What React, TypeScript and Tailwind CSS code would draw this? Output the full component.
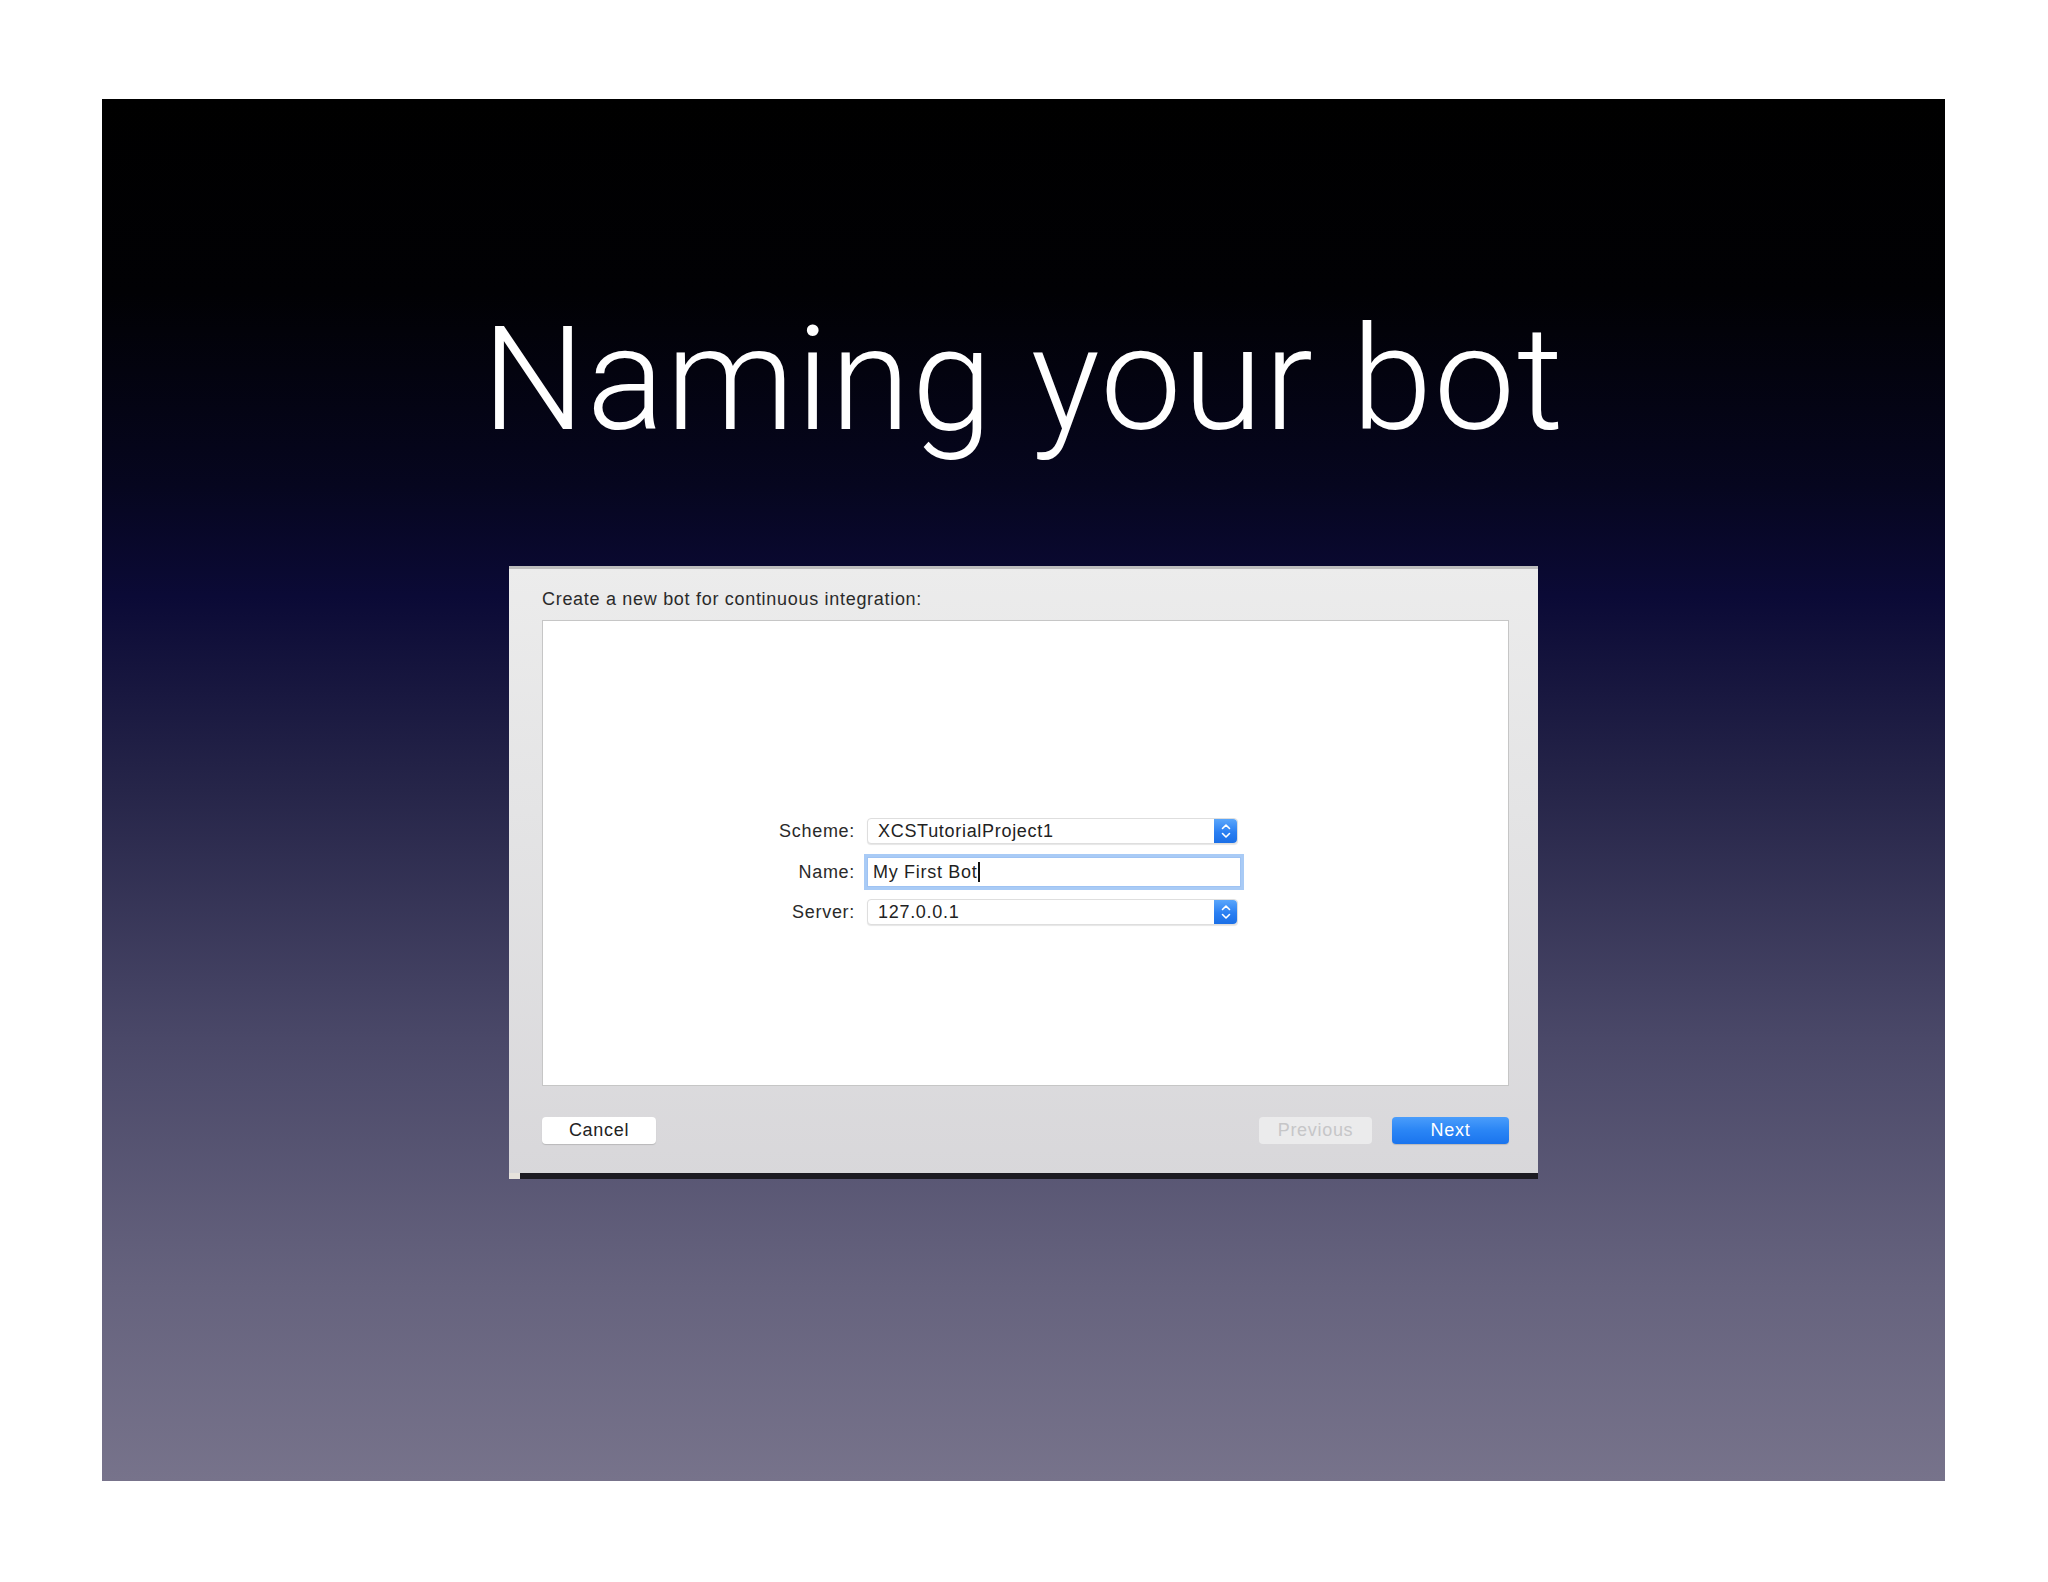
import React from "react";

function Stepper() {
  return (
    <div className="flex h-full w-[23px] flex-col items-center justify-center gap-[2px] rounded-r-[4px] bg-[linear-gradient(180deg,#5aa6fb_0%,#2a7ff2_55%,#1b6fe6_100%)]">
      <svg width="10" height="7" viewBox="0 0 10 7" fill="none">
        <path d="M1.5 5.5 L5 2 L8.5 5.5" stroke="white" strokeWidth="1.6" strokeLinecap="round" strokeLinejoin="round" />
      </svg>
      <svg width="10" height="7" viewBox="0 0 10 7" fill="none">
        <path d="M1.5 1.5 L5 5 L8.5 1.5" stroke="white" strokeWidth="1.6" strokeLinecap="round" strokeLinejoin="round" />
      </svg>
    </div>
  );
}

function Select({ value }: { value: string }) {
  return (
    <div className="flex h-[26px] w-[371px] items-stretch rounded-[4px] border border-[#dedede] bg-white shadow-[0_1px_1px_rgba(0,0,0,0.10)]">
      <div className="flex flex-1 items-center pl-[10px] text-[18px] leading-none tracking-[0.7px] text-[#222]">{value}</div>
      <Stepper />
    </div>
  );
}

export default function App() {
  const font = { fontFamily: '"Liberation Sans", Arial, sans-serif' };
  return (
    <div className="min-h-[1582px] w-[2048px] bg-white pl-[102px] pt-[99px]" style={font}>
      <div className="flex h-[1382px] w-[1843px] flex-col items-center bg-[linear-gradient(180deg,#000000_0%,#010104_14%,#06061f_28%,#0b0a36_36%,#262549_50%,#4a4868_68%,#66637e_86%,#77738b_100%)]">
        <h1
          className="mt-[208px] text-[145px] font-light leading-[144px] tracking-[1.6px] text-white"
          style={{ fontFamily: 'Roboto, "Liberation Sans", sans-serif' }}
        >
          Naming your bot
        </h1>

        <div className="mt-[115px] flex h-[613px] w-[1029px] flex-col bg-[linear-gradient(180deg,#ececec_0%,#e4e4e5_40%,#d8d7da_100%)]">
          <div className="h-[3px] bg-[#bdbdbd]" />
          <div className="flex flex-1 flex-col pl-[33px] pr-[29px] pt-[20px]">
            <div className="h-[20px] text-[18px] leading-[20px] tracking-[0.7px] text-[#2a2a2a]">
              Create a new bot for continuous integration:
            </div>
            <div className="mt-[11px] h-[466px] border border-[#c6c6c6] bg-white pt-[197px] pl-[152px]">
              <div className="grid grid-cols-[160px_auto] gap-x-[12px] text-[18px] tracking-[0.7px]">
                <div className="flex h-[26px] items-center justify-end text-[#2a2a2a]">Scheme:</div>
                <Select value="XCSTutorialProject1" />

                <div className="mt-[13px] flex h-[30px] items-center justify-end text-[#2a2a2a]">Name:</div>
                <div className="mt-[13px] flex h-[30px] w-[374px] items-center border border-[#9fc3f3] bg-white pl-[5px] text-[#1f1f1f] ring-[3px] ring-[#a9cbf6]">
                  My First Bot
                  <span className="ml-[1px] inline-block h-[20px] w-[1.5px] bg-[#111]" />
                </div>

                <div className="mt-[12px] flex h-[26px] items-center justify-end text-[#2a2a2a]">Server:</div>
                <div className="mt-[12px]">
                  <Select value="127.0.0.1" />
                </div>
              </div>
            </div>

            <div className="mt-[31px] flex h-[27px] items-stretch text-[18px] tracking-[0.7px]">
              <div className="flex w-[114px] items-center justify-center rounded-[4px] bg-white text-[#222] shadow-[0_1px_1px_rgba(0,0,0,0.15)]">
                Cancel
              </div>
              <div className="flex-1" />
              <div className="flex w-[113px] items-center justify-center rounded-[4px] bg-[#ebebec] text-[#c6c6c8]">
                Previous
              </div>
              <div className="ml-[20px] flex w-[117px] items-center justify-center rounded-[4px] bg-[linear-gradient(180deg,#4a9dfb_0%,#2a85f5_50%,#1a74ee_100%)] text-white shadow-[0_1px_1px_rgba(0,0,0,0.15)]">
                Next
              </div>
            </div>
          </div>
          <div className="flex h-[6px]">
            <div className="w-[11px] bg-[#e6e2dc]" />
            <div className="flex-1 bg-[#1c1b22]" />
          </div>
        </div>
      </div>
    </div>
  );
}
